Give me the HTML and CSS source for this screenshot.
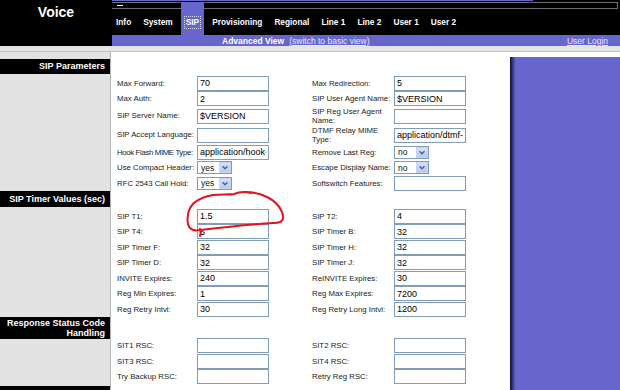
FILE: index.html
```html
<!DOCTYPE html>
<html lang="en">
<head>
    <meta charset="UTF-8">
    <title>Voice - SIP</title>
    <link rel="stylesheet" href="styles.css">
</head>
<body>
    <header class="top">
        <div class="brand">Voice</div>
        <div class="nav">
            <div class="topline"></div>
            <ul class="tabs">
                <li class="tab">Info</li>
                <li class="tab">System</li>
                <li class="tab active"><span>SIP</span></li>
                <li class="tab">Provisioning</li>
                <li class="tab">Regional</li>
                <li class="tab">Line 1</li>
                <li class="tab">Line 2</li>
                <li class="tab">User 1</li>
                <li class="tab">User 2</li>
            </ul>
            <div class="subbar">
                <b>Advanced View</b>
                <a class="sublink">(switch to basic view)</a>
                <a class="sublink login">User Login</a>
            </div>
        </div>
    </header>
    <div class="band"></div>

    <div class="main">
        <div class="form-area">
            <section class="sec first">
                <div class="side"><h3 class="sec-title">SIP Parameters</h3></div>
                <div class="fields">
                    <label>Max Forward:</label><input type="text" value="70">
                    <label>Max Redirection:</label><input type="text" value="5">

                    <label>Max Auth:</label><input type="text" value="2">
                    <label>SIP User Agent Name:</label><input type="text" value="$VERSION">

                    <label>SIP Server Name:</label><input type="text" value="$VERSION">
                    <label class="two">SIP Reg User Agent<br>Name:</label><input type="text" value="">

                    <label>SIP Accept Language:</label><input type="text" value="">
                    <label class="two">DTMF Relay MIME<br>Type:</label><input type="text" value="application/dtmf-relay">

                    <label class="tight">Hook Flash MIME Type:</label><input type="text" value="application/hook-flash">
                    <label>Remove Last Reg:</label>
                    <div class="sel">no<i class="arr"><svg viewBox="0 0 12 11"><path d="M3 4 L6 7 L9 4"/></svg></i></div>

                    <label>Use Compact Header:</label>
                    <div class="sel">yes<i class="arr"><svg viewBox="0 0 12 11"><path d="M3 4 L6 7 L9 4"/></svg></i></div>
                    <label>Escape Display Name:</label>
                    <div class="sel">no<i class="arr"><svg viewBox="0 0 12 11"><path d="M3 4 L6 7 L9 4"/></svg></i></div>

                    <label>RFC 2543 Call Hold:</label>
                    <div class="sel">yes<i class="arr"><svg viewBox="0 0 12 11"><path d="M3 4 L6 7 L9 4"/></svg></i></div>
                    <label>Softswitch Features:</label><input type="text" value="">
                </div>
            </section>

            <section class="sec timers">
                <div class="side"><h3 class="sec-title">SIP Timer Values (sec)</h3></div>
                <div class="fields">
                    <label>SIP T1:</label><input type="text" value="1.5">
                    <label>SIP T2:</label><input type="text" value="4">

                    <label>SIP T4:</label><input type="text" value="5">
                    <label>SIP Timer B:</label><input type="text" value="32">

                    <label>SIP Timer F:</label><input type="text" value="32">
                    <label>SIP Timer H:</label><input type="text" value="32">

                    <label>SIP Timer D:</label><input type="text" value="32">
                    <label>SIP Timer J:</label><input type="text" value="32">

                    <label>INVITE Expires:</label><input type="text" value="240">
                    <label>ReINVITE Expires:</label><input type="text" value="30">

                    <label>Reg Min Expires:</label><input type="text" value="1">
                    <label>Reg Max Expires:</label><input type="text" value="7200">

                    <label>Reg Retry Intvl:</label><input type="text" value="30">
                    <label>Reg Retry Long Intvl:</label><input type="text" value="1200">
                </div>
            </section>

            <section class="sec rsc">
                <div class="side"><h3 class="sec-title">Response Status Code<br>Handling</h3></div>
                <div class="fields">
                    <label>SIT1 RSC:</label><input type="text" value="">
                    <label>SIT2 RSC:</label><input type="text" value="">

                    <label>SIT3 RSC:</label><input type="text" value="">
                    <label>SIT4 RSC:</label><input type="text" value="">

                    <label>Try Backup RSC:</label><input type="text" value="">
                    <label>Retry Reg RSC:</label><input type="text" value="">
                </div>
            </section>

            <!-- next section, only its bar edge shows -->
            <section class="sec">
                <div class="side"><div class="sec-title">&nbsp;</div></div>
                <div class="fields"></div>
            </section>
        </div>
        <aside class="side-panel"></aside>
    </div>

    <!-- hand-drawn marker around SIP T1 -->
    <svg class="scribble" viewBox="0 0 620 390">
        <path d="M245 192 C262 192 276 200 281 210 C285 218 284 223 274 223 C255 224 225 227 200 230 C190 232 186 226 188 215 C189 204 197 198 213 195 C222 194 228 195 234 194 C239 192 243 191 251 193"/>
        <path d="M200 229 C201 231 201 233 200 236"/>
    </svg>
</body>
</html>
```

FILE: styles.css
```css
:root {
    --purple: #6666cc;
    --side-grey: #e2e2e2;
    --input-border: #7f9db9;
}

* {
    margin: 0;
    padding: 0;
    box-sizing: border-box;
}

html, body {
    overflow: hidden;
}

body {
    width: 620px;
    font-family: "Liberation Sans", Arial, sans-serif;
    font-size: 8px;
    color: #111;
    background: #fff;
    position: relative;
}

/* header */
.top {
    display: grid;
    grid-template-columns: 112px 1fr;
    background: #000;
    height: 46px;
}

.brand {
    color: #fff;
    font-weight: bold;
    font-size: 14px;
    text-align: center;
    padding-top: 4px;
}

.topline {
    width: 421px;
    height: 1px;
    background: var(--purple);
    margin-bottom: 1px;
}

.tabs {
    list-style: none;
    display: flex;
    gap: 4px;
    height: 33px;
    background:
        linear-gradient(#fff, #fff) 5px 3px / 6px 1px no-repeat,
        linear-gradient(#6f6f6f, #6f6f6f) 0 0 / 506px 1px no-repeat,
        linear-gradient(#6f6f6f, #6f6f6f) 0 6px / 506px 1px no-repeat,
        linear-gradient(#6f6f6f, #6f6f6f) 505px 0 / 1px 7px no-repeat,
        #000;
}

.tab {
    display: flex;
    align-items: center;
    padding: 7px 4px 0;
    color: #fff;
    font-weight: bold;
    font-size: 8.3px;
}

.tab.active {
    background: var(--purple);
    padding: 7px 3px 0;
}

.tab.active span {
    border: 1px dotted #d8d8f0;
    padding: 0 1px;
    line-height: 11px;
}

.subbar {
    display: flex;
    align-items: center;
    height: 11px;
    background: var(--purple);
    color: #fff;
    font-size: 8.5px;
    padding-left: 110px;
    padding-right: 12px;
}

.sublink {
    color: #e6e6ff;
    text-decoration: underline;
    margin-left: 5px;
}

.sublink.login {
    margin-left: auto;
}

.band {
    height: 6px;
    background: #e4e4e4;
    border-bottom: 1px solid #c2c2c2;
}

/* body */
.main {
    display: flex;
}

.form-area {
    width: 510px;
}

.side-panel {
    flex: 1;
    margin-top: 5px;
    background: linear-gradient(to right, #0d0d26 0, #2a2a66 2px, #4f4fa8 4px, var(--purple) 6px);
}

.sec {
    display: grid;
    grid-template-columns: 111px 1fr;
}

.side {
    background: var(--side-grey);
    border-right: 1px solid #b5b5b5;
}

.sec-title {
    background: #000;
    color: #fff;
    font-size: 9px;
    font-weight: bold;
    text-align: right;
    padding: 0 5px;
    line-height: 16px;
}

.sec.first .sec-title {
    margin-top: 7px;
    line-height: 15px;
}

.sec.rsc .sec-title {
    line-height: 10px;
    padding-top: 1px;
    padding-bottom: 1px;
}

.fields {
    display: grid;
    grid-template-columns: 80px 115px 82px 1fr;
    grid-auto-rows: minmax(15.5px, auto);
    align-items: center;
    padding-left: 6px;
}

.sec.first .fields {
    padding-top: 23.5px;
}

.sec.timers .fields {
    padding-top: 17.5px;
}

.sec.rsc .fields {
    padding-top: 21px;
    padding-bottom: 1.5px;
}

label {
    white-space: nowrap;
    font-size: 7.8px;
    line-height: 9.5px;
    color: #1a1a1a;
}

label.tight {
    letter-spacing: -0.35px;
}

input {
    width: 72px;
    height: 15px;
    border: 1px solid var(--input-border);
    font-family: "Liberation Sans", Arial, sans-serif;
    font-size: 9px;
    color: #000;
    padding: 0 2px;
    background: #fff;
    outline: none;
}

.sel {
    display: flex;
    align-items: center;
    justify-content: space-between;
    width: 35px;
    height: 13px;
    border: 1px solid var(--input-border);
    font-size: 8.5px;
    padding-left: 3px;
    background: #fff;
}

.arr {
    display: flex;
    width: 12px;
    height: 11px;
    background: linear-gradient(#d4e0fc, #b8cbf6);
    border: 1px solid #c4d3f6;
}

.arr svg {
    width: 100%;
    height: 100%;
    fill: none;
    stroke: #4d6185;
    stroke-width: 1.7;
}

.scribble {
    position: absolute;
    left: 0;
    top: 0;
    width: 620px;
    height: 390px;
    pointer-events: none;
    fill: none;
    stroke: #e8101a;
    stroke-width: 2;
    stroke-linecap: round;
}
```
